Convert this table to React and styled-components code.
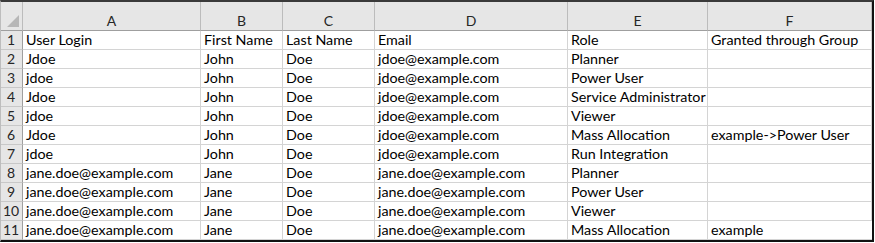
import React from "react";
import styled, { createGlobalStyle } from "styled-components";

const Global = createGlobalStyle`
  html, body { margin: 0; padding: 0; background: #ffffff; }
  body { font-family: Lato, "Open Sans", sans-serif; }
`;

const COLS = [22, 178, 82, 92, 193, 140, 164];

const Frame = styled.div`
  width: 871px;
  border-top: 2px solid #3a3a3a;
  border-right: 2px solid #111;
  border-bottom: 2px solid #111;
  border-left: 1px solid #bdbdbd;
  box-sizing: content-box;
  margin-right: 1px;
`;

const Grid = styled.div`
  display: grid;
  grid-template-columns: ${COLS.map((c) => c + "px").join(" ")};
  grid-auto-rows: 19px;
  grid-template-rows: 29px;
`;

const Corner = styled.div`
  position: relative;
  background: #e6e6e6;
  border-right: 1px solid #bcbcbc;
  border-bottom: 1px solid #9f9f9f;
  box-sizing: border-box;
  &::after {
    content: "";
    position: absolute;
    right: 3px;
    bottom: 3px;
    width: 0;
    height: 0;
    border-left: 12px solid transparent;
    border-bottom: 12px solid #b7b7b7;
  }
`;

const ColHead = styled.div`
  background: #e6e6e6;
  border-right: 1px solid #bcbcbc;
  border-bottom: 1px solid #9f9f9f;
  box-sizing: border-box;
  display: flex;
  align-items: flex-end;
  justify-content: center;
  padding-bottom: 0px;
  font-size: 14px;
  color: #262626;
  line-height: 18px;
`;

const RowHead = styled.div`
  background: #e6e6e6;
  border-right: 1px solid #9f9f9f;
  border-bottom: 1px solid #c8c8c8;
  box-sizing: border-box;
  display: flex;
  align-items: flex-end;
  justify-content: center;
  font-size: 14px;
  color: #262626;
  line-height: 18px;
  padding-right: 1px;
`;

const Cell = styled.div`
  border-right: 1px solid #d4d4d4;
  border-bottom: 1px solid #d4d4d4;
  box-sizing: border-box;
  padding-left: 3px;
  font-size: 14.3px;
  color: #000;
  line-height: 18px;
  white-space: nowrap;
  overflow: visible;
  display: flex;
  align-items: flex-end;
  &:last-child { border-right: none; }
`;

const headers = ["A", "B", "C", "D", "E", "F"];

const rows = [
  ["User Login", "First Name", "Last Name", "Email", "Role", "Granted through Group"],
  ["Jdoe", "John", "Doe", "jdoe@example.com", "Planner", ""],
  ["jdoe", "John", "Doe", "jdoe@example.com", "Power User", ""],
  ["Jdoe", "John", "Doe", "jdoe@example.com", "Service Administrator", ""],
  ["jdoe", "John", "Doe", "jdoe@example.com", "Viewer", ""],
  ["Jdoe", "John", "Doe", "jdoe@example.com", "Mass Allocation", "example->Power User"],
  ["jdoe", "John", "Doe", "jdoe@example.com", "Run Integration", ""],
  ["jane.doe@example.com", "Jane", "Doe", "jane.doe@example.com", "Planner", ""],
  ["jane.doe@example.com", "Jane", "Doe", "jane.doe@example.com", "Power User", ""],
  ["jane.doe@example.com", "Jane", "Doe", "jane.doe@example.com", "Viewer", ""],
  ["jane.doe@example.com", "Jane", "Doe", "jane.doe@example.com", "Mass Allocation", "example"],
];

export default function App() {
  return (
    <>
      <Global />
      <Frame>
        <Grid>
          <Corner />
          {headers.map((h) => (
            <ColHead key={h}>{h}</ColHead>
          ))}
          {rows.map((r, i) => (
            <React.Fragment key={i}>
              <RowHead>{i + 1}</RowHead>
              {r.map((c, j) => (
                <Cell key={j}>{c}</Cell>
              ))}
            </React.Fragment>
          ))}
        </Grid>
      </Frame>
    </>
  );
}
